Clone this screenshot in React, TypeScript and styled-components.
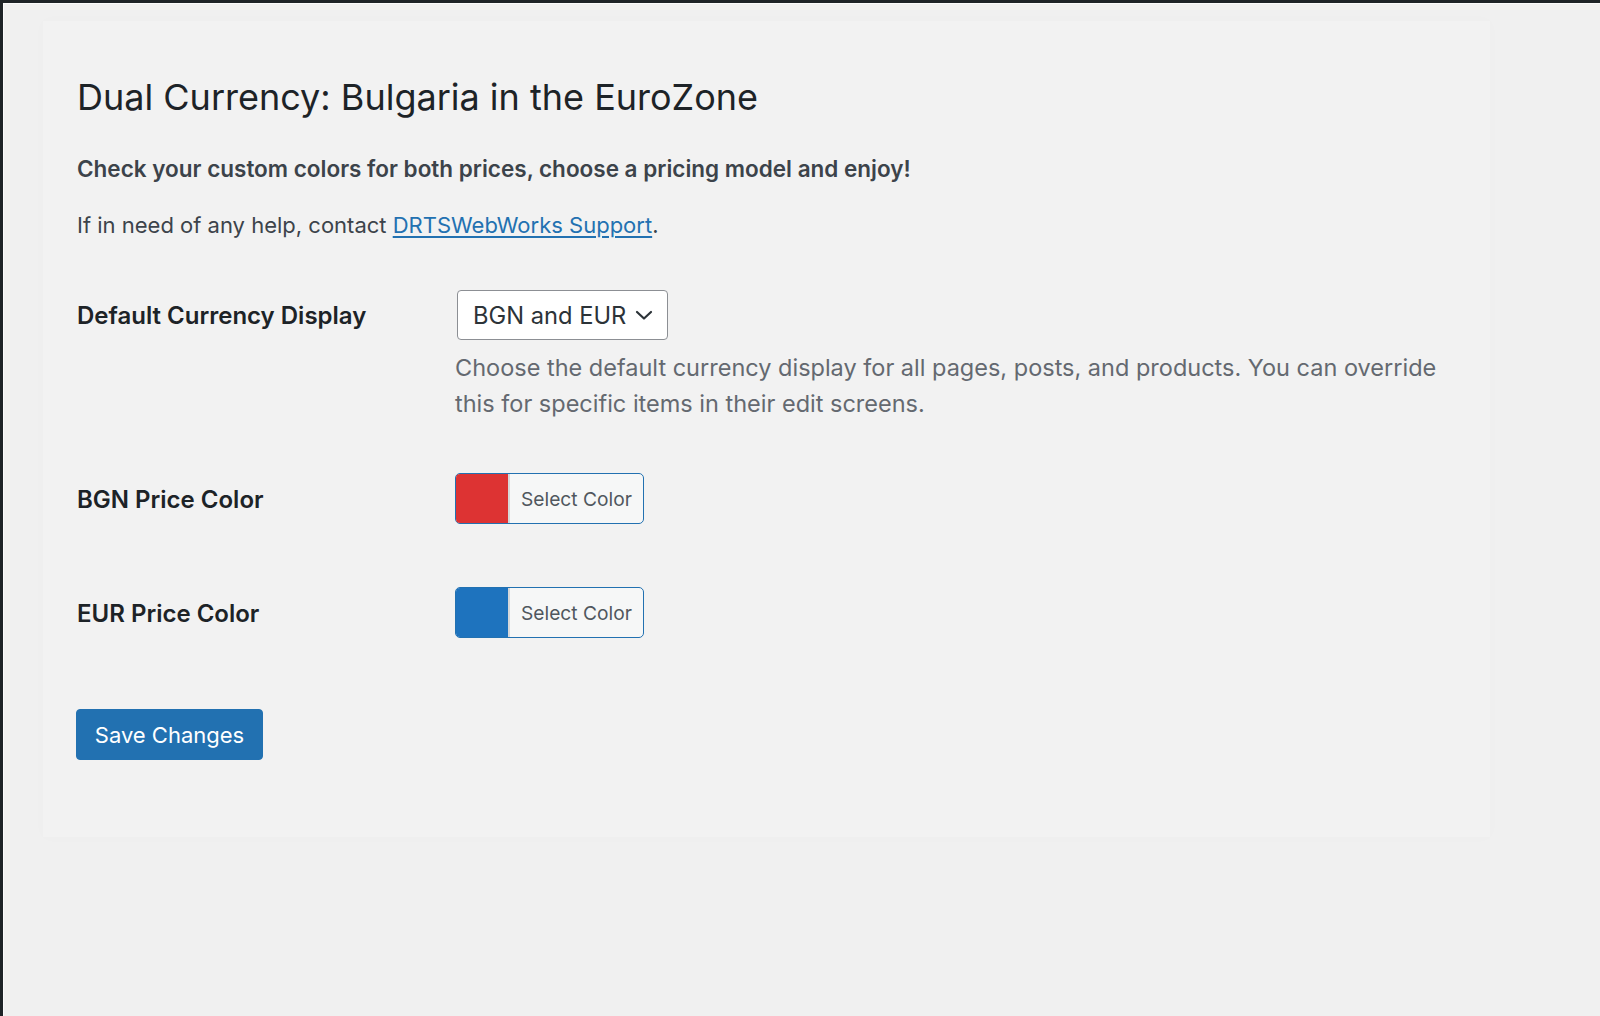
import React from "react";
import styled, { createGlobalStyle } from "styled-components";

const GlobalStyle = createGlobalStyle`
  html, body { margin: 0; padding: 0; background: #f0f0f0; }
  body { font-family: Inter, "Noto Sans", sans-serif; -webkit-font-smoothing: antialiased; }
  * { box-sizing: border-box; }
`;

const Frame = styled.div`
  min-height: 100vh;
  background: #f0f0f0;
  border-top: 3px solid #1e2327;
  border-left: 3px solid #1e2327;
  box-shadow: inset 1px 1px 0 #fbfbfb;
  padding: 18px 0 0 40px;
`;

const Card = styled.div`
  width: 1447px;
  height: 816px;
  background: #f2f2f2;
  box-shadow: 0 0 14px rgba(0, 0, 0, 0.015);
  padding: 52px 0 0 34px;
`;

const Title = styled.h1`
  margin: 0;
  font-size: 36px;
  line-height: 48px;
  font-weight: 400;
  color: #1d2327;
`;

const Lead = styled.p<{ $bold?: boolean; $mt: number; $size: number }>`
  margin: ${(p) => p.$mt}px 0 0;
  font-size: ${(p) => p.$size}px;
  line-height: 30px;
  font-weight: ${(p) => (p.$bold ? 600 : 400)};
  color: #3c434a;
`;

const Link = styled.a`
  color: #2271b1;
  text-decoration: underline;
  text-underline-offset: 3px;
`;

const FormRow = styled.div<{ $mt: number }>`
  display: grid;
  grid-template-columns: 378px 1fr;
  margin-top: ${(p) => p.$mt}px;
`;

const Label = styled.div<{ $pt: number }>`
  padding-top: ${(p) => p.$pt}px;
  font-size: 24px;
  line-height: 30px;
  font-weight: 600;
  color: #1d2327;
`;

const Field = styled.div`
  display: flex;
  flex-direction: column;
  align-items: flex-start;
`;

const Select = styled.div`
  margin-left: 2px;
  width: 211px;
  height: 50px;
  display: flex;
  align-items: center;
  justify-content: space-between;
  padding: 0 14px 0 15px;
  background: #fff;
  border: 1px solid #8c8f94;
  border-radius: 4px;
  font-size: 23.7px;
  color: #2c3338;
`;

const Description = styled.p`
  margin: 10px 0 0;
  width: 1000px;
  font-size: 23.5px;
  line-height: 36px;
  color: #646970;
`;

const ColorButton = styled.div`
  display: flex;
  width: 189px;
  height: 51px;
  border: 1px solid #2271b1;
  border-radius: 5px;
  overflow: hidden;
  background: #f6f7f7;
`;

const Swatch = styled.div<{ $color: string }>`
  width: 52px;
  flex: none;
  background: ${(p) => p.$color};
`;

const SwatchText = styled.div`
  flex: 1;
  display: flex;
  align-items: center;
  padding-left: 11px;
  border-left: 2px solid #d6d7d9;
  font-size: 19.2px;
  color: #50575e;
`;

const SaveButton = styled.button<{ $mt: number }>`
  display: block;
  margin: ${(p) => p.$mt}px 0 0 -1px;
  width: 187px;
  height: 51px;
  background: #2271b1;
  border: 1px solid #2271b1;
  border-radius: 4px;
  color: #fff;
  font-family: inherit;
  font-size: 22px;
  padding: 0;
`;

const Chevron = () => (
  <svg width="18" height="12" viewBox="0 0 18 12" fill="none">
    <path d="M2 3 L9 9.5 L16 3" stroke="#2c3338" strokeWidth="2.2" strokeLinecap="round" strokeLinejoin="round" />
  </svg>
);

export default function App() {
  return (
    <>
      <GlobalStyle />
      <Frame>
        <Card>
          <Title>Dual Currency: Bulgaria in the EuroZone</Title>
          <Lead $bold $mt={33} $size={22.5}>
            Check your custom colors for both prices, choose a pricing model and enjoy!
          </Lead>
          <Lead $mt={26} $size={22}>
            If in need of any help, contact <Link href="#">DRTSWebWorks Support</Link>.
          </Lead>
          <FormRow $mt={50}>
            <Label $pt={11}>Default Currency Display</Label>
            <Field>
              <Select>
                <span>BGN and EUR</span>
                <Chevron />
              </Select>
              <Description>
                Choose the default currency display for all pages, posts, and products. You can override this for specific items in their edit screens.
              </Description>
            </Field>
          </FormRow>
          <FormRow $mt={51}>
            <Label $pt={12}>BGN Price Color</Label>
            <Field>
              <ColorButton>
                <Swatch $color="#dd3333" />
                <SwatchText>Select Color</SwatchText>
              </ColorButton>
            </Field>
          </FormRow>
          <FormRow $mt={63}>
            <Label $pt={12}>EUR Price Color</Label>
            <Field>
              <ColorButton>
                <Swatch $color="#1e73be" />
                <SwatchText>Select Color</SwatchText>
              </ColorButton>
            </Field>
          </FormRow>
          <SaveButton $mt={71}>Save Changes</SaveButton>
        </Card>
      </Frame>
    </>
  );
}
